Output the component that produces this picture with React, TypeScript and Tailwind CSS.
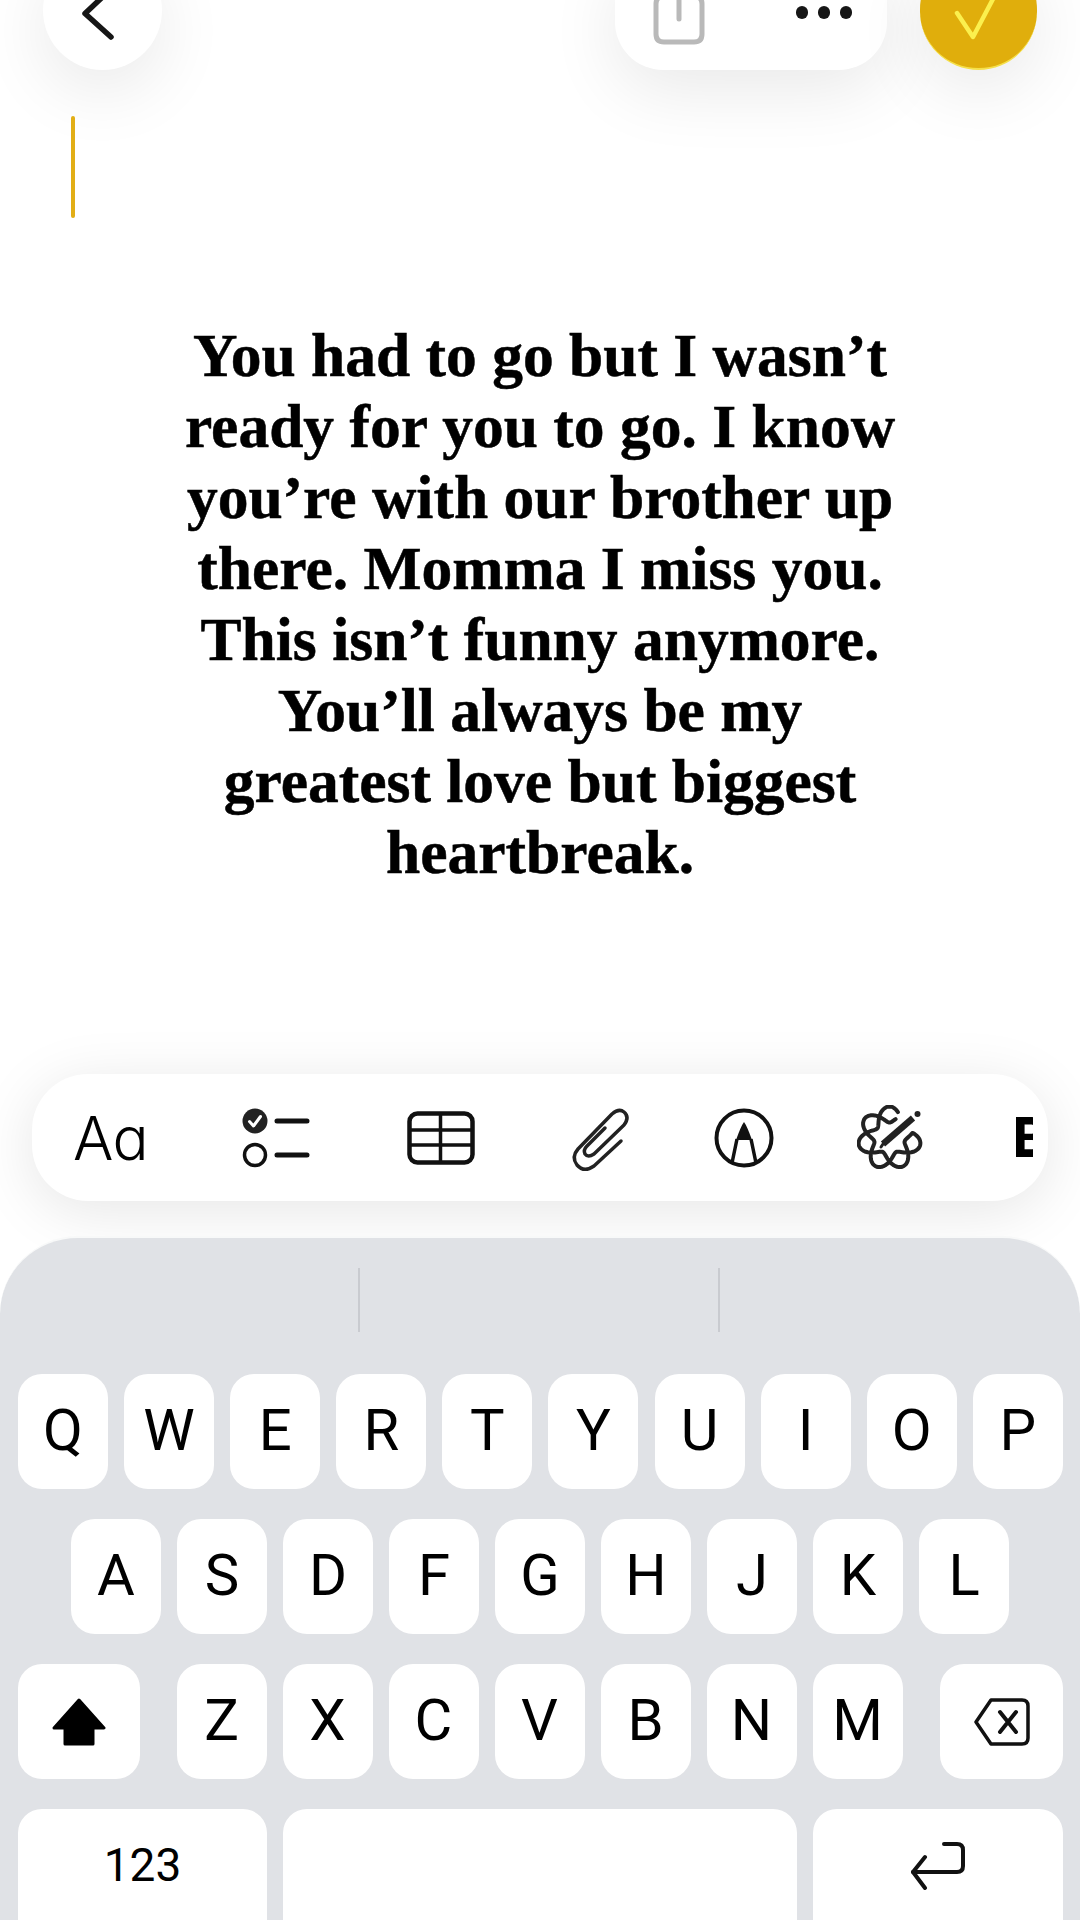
const ROW_1 = ['Q', 'W', 'E', 'R', 'T', 'Y', 'U', 'I', 'O', 'P'];
const ROW_2 = ['A', 'S', 'D', 'F', 'G', 'H', 'J', 'K', 'L'];
const ROW_3 = ['Z', 'X', 'C', 'V', 'B', 'N', 'M'];

// braided seven-lobed ring of the writing tools icon, open at the upper right for the pencil
function rosettePath() {
  let d = '';
  let pen = false;
  for (let deg = 0; deg <= 720; deg += 3) {
    const t = (deg * Math.PI) / 180;
    const r = 23.5 + 8 * Math.cos(3.5 * (t - Math.PI / 2));
    const angle = deg % 360;
    if (angle > 14 && angle < 72) {
      pen = false;
      continue;
    }
    const x = 32.5 + r * Math.cos(t);
    const y = 33 - r * Math.sin(t);
    d += `${pen ? 'L' : 'M'}${x.toFixed(1)} ${y.toFixed(1)} `;
    pen = true;
  }
  return d;
}

function Key({ label }: { label: string }) {
  return (
    <div className="w-[90px] h-[115px] rounded-[24px] bg-white flex items-center justify-center pb-[4px] text-[58px] leading-none text-black font-['Roboto',sans-serif]">
      {label}
    </div>
  );
}

export default function App() {
  return (
    <div className="relative w-[1080px] h-[1920px] overflow-hidden bg-white flex flex-col">
      {/* Top buttons */}
      <div className="flex items-start h-[119px] -mt-[49px] shrink-0">
        <div className="ml-[43px] w-[119px] h-[119px] rounded-full bg-white shadow-[0_20px_70px_rgba(0,0,0,0.09)] flex items-center justify-center">
          <svg width="50" height="60" viewBox="0 0 50 60" fill="none" stroke="#161616" strokeWidth="5.5" strokeLinecap="round" strokeLinejoin="round">
            <path d="M33 8 L7 32.5 L33 56" />
          </svg>
        </div>
        <div className="ml-[453px] w-[272px] h-[119px] rounded-[48px] bg-white shadow-[0_20px_70px_rgba(0,0,0,0.09)] flex items-start">
          <svg className="ml-[36px] mt-[34px]" width="56" height="64" viewBox="0 0 56 64" fill="none" stroke="#b9b9b9" strokeWidth="5" strokeLinecap="round">
            <path d="M15 11 H13 Q5 11 5 19 V49 Q5 57 13 57 H43 Q51 57 51 49 V19 Q51 11 43 11 H41" />
            <path d="M28 2 V34" />
          </svg>
          <div className="ml-[89px] mt-[55px] flex gap-[10px]">
            <div className="w-[12px] h-[13px] rounded-full bg-[#161616]" />
            <div className="w-[12px] h-[13px] rounded-full bg-[#161616]" />
            <div className="w-[12px] h-[13px] rounded-full bg-[#161616]" />
          </div>
        </div>
        <div className="ml-[33px] w-[117px] h-[119px] rounded-full bg-[#e0ae0c] border-b-2 border-[#f5e04a] shadow-[0_20px_70px_rgba(0,0,0,0.09)] flex items-start justify-center">
          <svg className="mt-[30px] -ml-[3px]" width="60" height="60" viewBox="0 0 60 60" fill="none" stroke="#fbf04e" strokeWidth="4.5" strokeLinecap="round" strokeLinejoin="round">
            <path d="M10 32 L26 56 L46 18" />
          </svg>
        </div>
      </div>

      {/* Caret */}
      <div className="ml-[71px] mt-[46px] w-[4px] h-[102px] rounded-full bg-[#e2ae16] shrink-0" />

      {/* Note text */}
      <div className="mt-[102px] text-center text-black text-[61.5px] leading-[71px] font-bold [-webkit-text-stroke:0.5px_#000] font-['Liberation_Serif',serif] shrink-0">
        You had to go but I wasn’t<br />
        ready for you to go. I know<br />
        you’re with our brother up<br />
        there. Momma I miss you.<br />
        This isn’t funny anymore.<br />
        You’ll always be my<br />
        greatest love but biggest<br />
        heartbreak.
      </div>

      {/* Format toolbar */}
      <div className="relative mt-[186px] ml-[32px] w-[1016px] h-[127px] rounded-[56px] bg-white shadow-[0_10px_60px_rgba(0,0,0,0.1)] flex items-center shrink-0 overflow-hidden">
        <span className="ml-[41px] w-[77px] text-[60px] leading-none font-[350] tracking-[-1px] text-black whitespace-nowrap font-['Inter',sans-serif]">Aɑ</span>
        <svg className="ml-[92px]" width="68" height="60" viewBox="0 0 68 60" fill="none" stroke="#111" strokeWidth="4.5" strokeLinecap="round">
          <circle cx="13" cy="13" r="12.5" fill="#222" stroke="none" />
          <path d="M7.5 13.5 L11.5 18 L18.5 8.5" stroke="#fff" strokeWidth="3" strokeLinejoin="round" />
          <circle cx="13" cy="47" r="10.5" strokeWidth="3.5" />
          <path d="M35 13 H65 M35 47 H65" strokeWidth="5" />
        </svg>
        <svg className="ml-[97px]" width="68" height="54" viewBox="0 0 68 54" fill="none" stroke="#111" strokeWidth="4.5">
          <rect x="2.5" y="2.5" width="63" height="49" rx="8" />
          <path d="M33.5 3 V51" strokeWidth="3.5" />
          <path d="M3 19 H65 M3 34 H65" strokeWidth="3.5" />
        </svg>
        <svg className="ml-[97px] overflow-visible" width="55" height="62" viewBox="0 0 55 62" fill="none" stroke="#222" strokeWidth="3.5" strokeLinecap="round" strokeLinejoin="round">
          <path d="M49 34 L22 59 Q12 66 5 58 Q-1 50 6 42 L40 7 Q47 1 52 5 Q58 10 52 18 L22 47 Q16 51 13 47 Q11 43 15 39 L33 21" />
        </svg>
        <svg className="ml-[87px]" width="60" height="60" viewBox="0 0 60 60" fill="none" stroke="#111" strokeWidth="4">
          <circle cx="30" cy="30" r="27.5" />
          <path d="M18 55 L23 31 M42 55 L37 31" strokeWidth="3.5" />
          <path d="M30 14 Q33 18 38 32 H22 Q27 18 30 14 Z" fill="#111" stroke="none" />
        </svg>
        <svg className="ml-[83px]" width="66" height="66" viewBox="0 0 66 66" fill="none" stroke="#222" strokeWidth="4" strokeLinecap="round">
          <path d={rosettePath()} strokeLinejoin="round" />
          <path d="M26 39 L56 13" strokeWidth="6.5" strokeLinecap="butt" />
          <path d="M26 39 L24 42" strokeWidth="3" />
          <circle cx="60.5" cy="9" r="3" fill="#222" stroke="none" />
        </svg>
        <div className="absolute left-[984px] top-0 w-[17px] h-full overflow-hidden flex items-center">
          <span className="-ml-[4px] text-[55px] leading-none font-extrabold text-black font-['Inter',sans-serif]">B</span>
        </div>
      </div>

      {/* Keyboard */}
      <div className="relative z-10 mt-[35px] flex-1 rounded-t-[78px] bg-[#e0e2e6] border-t-2 border-[#f8f9f9] pt-[30px] flex flex-col">
        <div className="flex h-[64px] shrink-0">
          <div className="ml-[358px] w-[2px] h-full bg-[#c9cbd0]" />
          <div className="ml-[358px] w-[2px] h-full bg-[#c9cbd0]" />
        </div>
        <div className="mt-[42px] ml-[18px] flex gap-[16.1px] shrink-0">
          {ROW_1.map((k) => <Key key={k} label={k} />)}
        </div>
        <div className="mt-[30px] ml-[71px] flex gap-[16px] shrink-0">
          {ROW_2.map((k) => <Key key={k} label={k} />)}
        </div>
        <div className="mt-[30px] ml-[18px] flex shrink-0">
          <div className="w-[122px] h-[115px] rounded-[24px] bg-white flex items-center justify-center">
            <svg width="54" height="48" viewBox="0 0 54 48" fill="#000" stroke="#000" strokeWidth="3" strokeLinejoin="round">
              <path d="M27 2 L52 30 H41 V46 H13 V30 H2 Z" />
            </svg>
          </div>
          <div className="ml-[36.5px] flex gap-[16px]">
            {ROW_3.map((k) => <Key key={k} label={k} />)}
          </div>
          <div className="ml-[37.5px] w-[123px] h-[115px] rounded-[24px] bg-white flex items-center justify-center">
            <svg width="56" height="48" viewBox="0 0 56 48" fill="none" stroke="#111" strokeWidth="3.5" strokeLinejoin="round" strokeLinecap="round">
              <path d="M17 2 H48 Q54 2 54 8 V40 Q54 46 48 46 H17 L2 24 Z" />
              <path d="M26 14 L42 34 M42 14 L26 34" strokeWidth="4" />
            </svg>
          </div>
        </div>
        <div className="mt-[30px] ml-[18px] flex gap-[16px] shrink-0">
          <div className="w-[249px] h-[140px] rounded-[24px] bg-white flex items-center justify-center pb-[28px] text-[46px] leading-none text-black font-['Roboto',sans-serif]">123</div>
          <div className="w-[514px] h-[140px] rounded-[24px] bg-white" />
          <div className="w-[250px] h-[140px] rounded-[24px] bg-white flex items-start justify-center pt-[33px]">
            <svg width="56" height="48" viewBox="0 0 56 48" fill="none" stroke="#111" strokeWidth="4" strokeLinecap="round" strokeLinejoin="round">
              <path d="M34 2 H47 Q53 2 53 8 V24 Q53 30 47 30 H3" />
              <path d="M15 15 L3 30 L15 46" />
            </svg>
          </div>
        </div>
      </div>
    </div>
  );
}
